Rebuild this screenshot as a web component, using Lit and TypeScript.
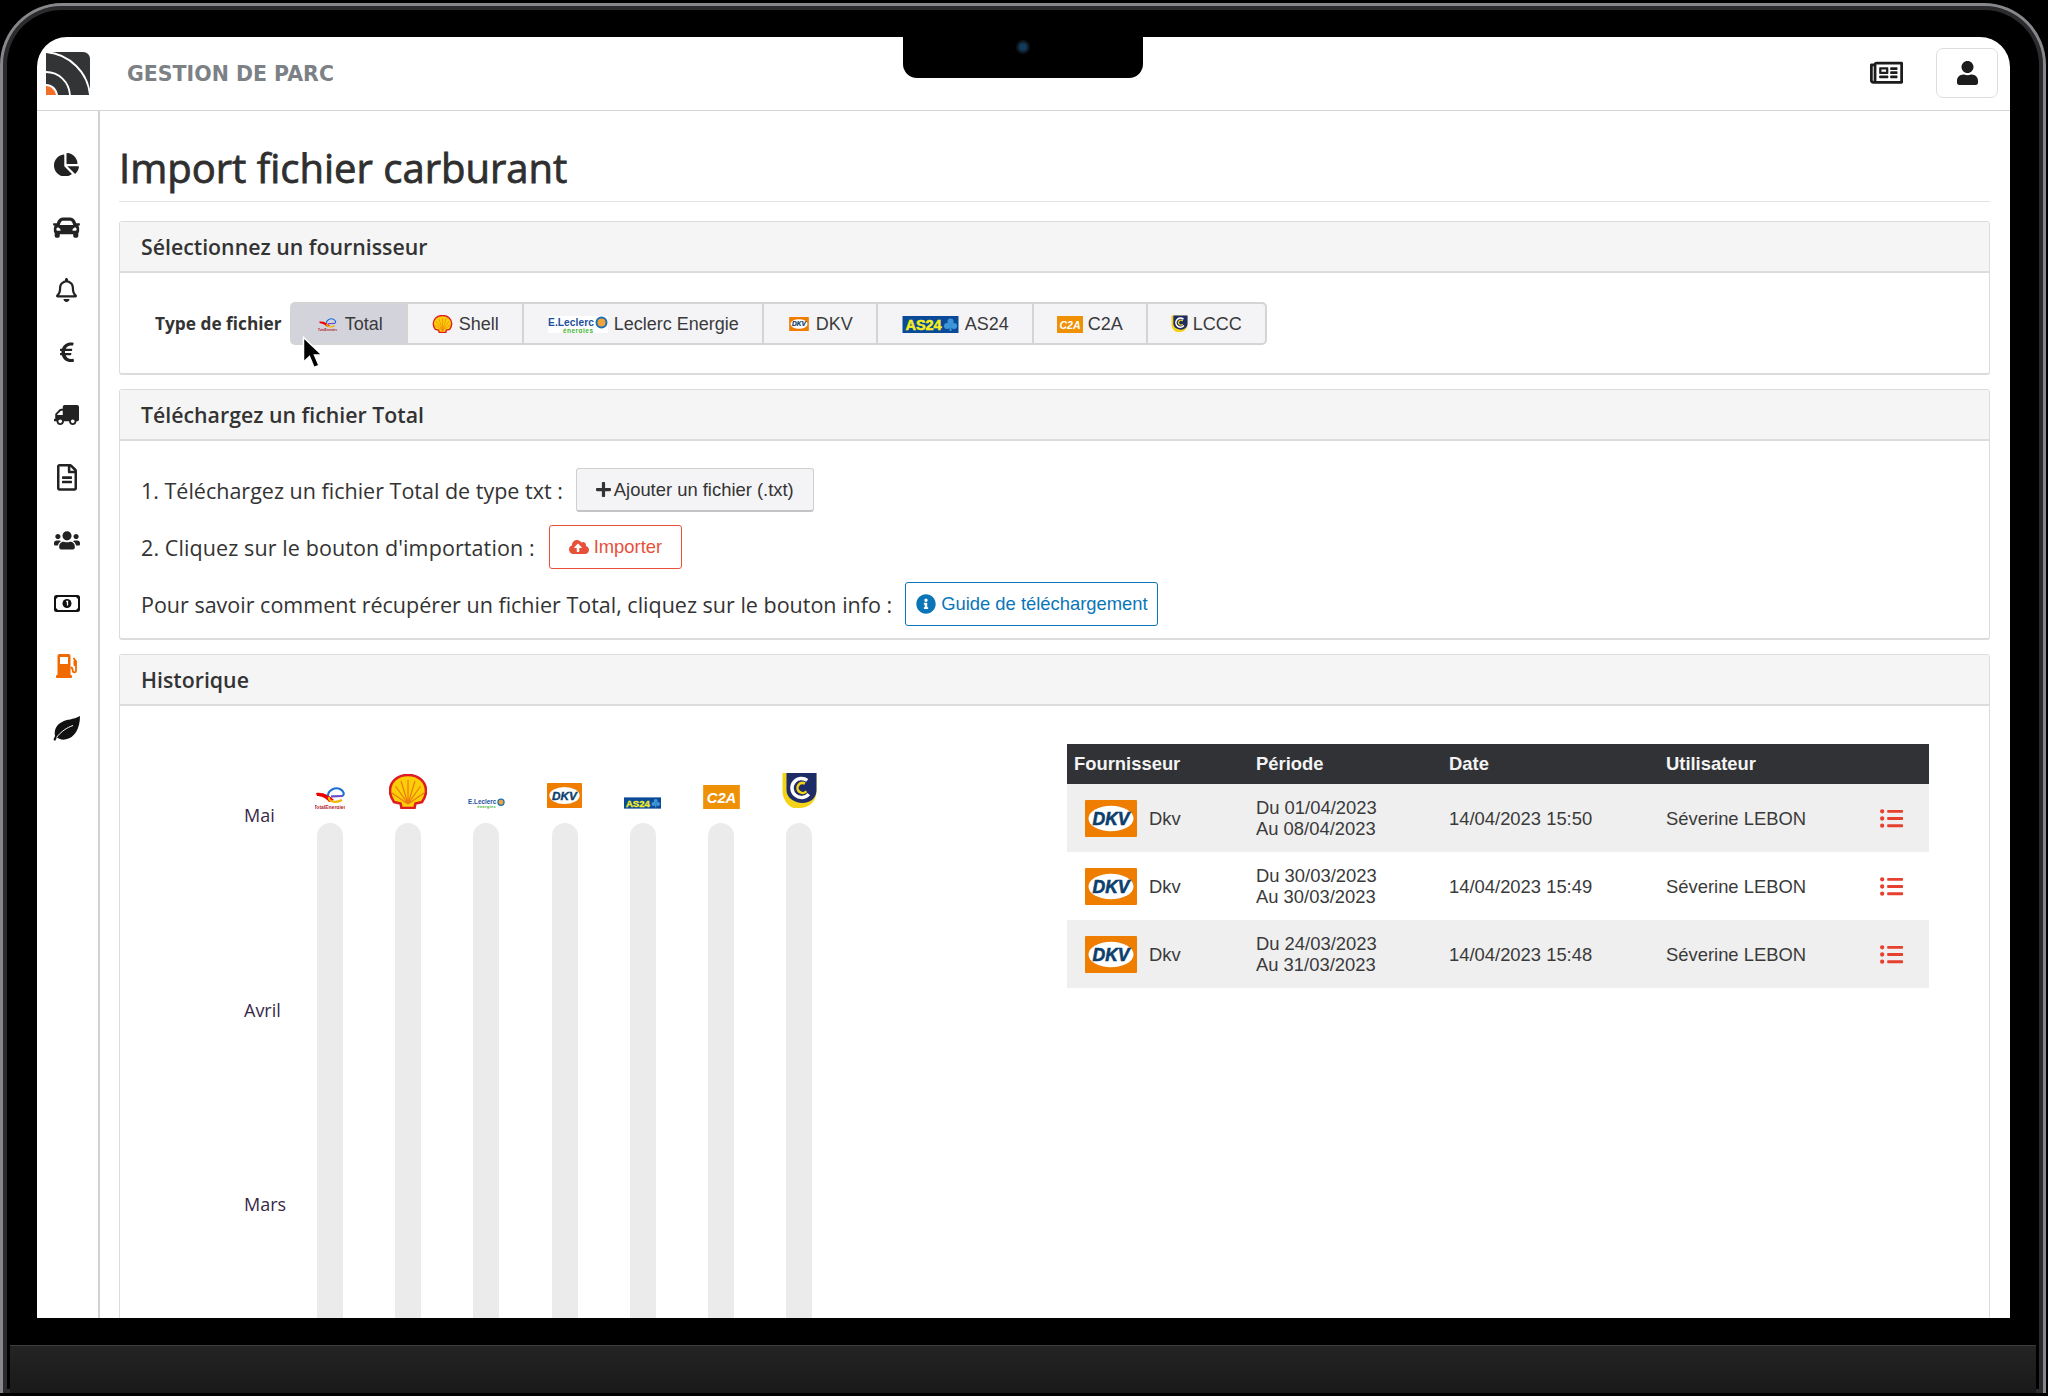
import { LitElement, html, css } from "lit";
import { customElement } from "lit/decorators.js";

const I = (w: number, vb: string, d: string, cls = "") =>
  html`<svg class=${cls} width=${w} viewBox=${vb} fill="currentColor"><path d=${d}></path></svg>`;

const P = {
  pie: "M527.79 288H290.5l158.03 158.03c6.04 6.04 15.98 6.53 22.19.68 38.7-36.46 65.32-85.61 73.13-140.86 1.34-9.46-6.51-17.85-16.06-17.85zm-15.83-64.8C503.72 103.74 408.26 8.28 288.8.04 279.68-.59 272 7.1 272 16.24V240h223.77c9.14 0 16.82-7.68 16.19-16.8zM224 288V50.71c0-9.55-8.39-17.4-17.84-16.06C86.99 51.49-4.1 155.6.14 280.37 4.5 408.51 114.83 513.59 243.03 511.98c50.4-.63 96.97-16.87 135.26-44.03 7.9-5.6 8.42-17.23 1.57-24.08L224 288z",
  car: "M499.99 176h-59.87l-16.64-41.6C406.38 91.63 365.57 64 319.5 64h-127c-46.06 0-86.88 27.63-103.99 70.4L71.87 176H12.01C4.2 176-1.53 183.34.37 190.91l6 24C7.7 220.25 12.5 224 18.01 224h20.07C24.65 235.73 16 252.78 16 272v48c0 16.12 6.16 30.67 16 41.93V416c0 17.67 14.33 32 32 32h32c17.67 0 32-14.33 32-32v-32h256v32c0 17.67 14.33 32 32 32h32c17.67 0 32-14.33 32-32v-54.07c9.84-11.25 16-25.8 16-41.93v-48c0-19.22-8.65-36.27-22.07-48H494c5.51 0 10.31-3.75 11.64-9.09l6-24c1.89-7.57-3.84-14.91-11.65-14.91zm-352.06-17.83c7.29-18.22 24.94-30.17 44.57-30.17h127c19.63 0 37.28 11.95 44.57 30.17L384 208H128l19.93-49.83zM96 319.8c-19.2 0-32-12.76-32-31.9S76.8 256 96 256s48 28.71 48 47.85-28.8 15.95-48 15.95zm320 0c-19.2 0-48 3.19-48-15.95S396.8 256 416 256s32 12.76 32 31.9-12.8 31.9-32 31.9z",
  bell: "M439.39 362.29c-19.32-20.76-55.47-51.99-55.47-154.29 0-77.7-54.48-139.9-127.94-155.16V32c0-17.67-14.32-32-31.98-32s-31.98 14.33-31.98 32v20.84C118.56 68.1 64.08 130.3 64.08 208c0 102.3-36.15 133.53-55.47 154.29-6 6.45-8.66 14.16-8.61 21.71.11 16.4 12.98 32 32.1 32h383.8c19.12 0 32-15.6 32.1-32 .05-7.55-2.61-15.27-8.61-21.71zM67.53 368c21.22-27.97 44.42-74.33 44.53-159.42 0-.2-.06-.38-.06-.58 0-61.86 50.14-112 112-112s112 50.14 112 112c0 .2-.06.38-.06.58.11 85.1 23.31 131.46 44.53 159.42H67.53zM224 512c35.32 0 63.97-28.65 63.97-64H160.03c0 35.35 28.65 64 63.97 64z",
  euro: "M310.706 413.765c-1.314-6.63-7.835-10.872-14.424-9.369-10.692 2.439-27.422 5.413-45.426 5.413-56.763 0-101.929-34.79-121.461-85.449h113.689a12 12 0 0 0 11.708-9.369l6.373-28.36c1.686-7.502-4.019-14.631-11.708-14.631H115.22c-1.21-14.328-1.414-28.287.137-42.245H261.95a12 12 0 0 0 11.723-9.434l6.512-29.755c1.638-7.484-4.061-14.566-11.723-14.566H130.184c20.633-44.991 62.69-75.03 117.619-75.03 14.486 0 28.564 2.25 37.851 4.145 6.216 1.268 12.347-2.498 14.002-8.623l11.991-44.368c1.822-6.741-2.465-13.616-9.326-14.917C290.217 34.912 270.71 32 249.635 32 152.451 32 74.03 92.252 45.075 176H12c-6.627 0-12 5.373-12 12v29.755c0 6.627 5.373 12 12 12h21.569c-1.009 13.607-1.181 29.287-.181 42.245H12c-6.627 0-12 5.373-12 12v28.36c0 6.627 5.373 12 12 12h30.114C67.139 414.692 145.264 480 249.635 480c26.301 0 48.562-4.544 61.101-7.788 6.167-1.595 10.027-7.708 8.788-13.957l-8.818-44.49z",
  truck: "M624 352h-16V243.9c0-12.7-5.1-24.9-14.1-33.9L494 110.1c-9-9-21.2-14.1-33.9-14.1H416V48c0-26.5-21.5-48-48-48H48C21.5 0 0 21.5 0 48v320c0 26.5 21.5 48 48 48h16c0 53 43 96 96 96s96-43 96-96h128c0 53 43 96 96 96s96-43 96-96h48c8.8 0 16-7.2 16-16v-32c0-8.8-7.2-16-16-16zM160 464c-26.5 0-48-21.5-48-48s21.5-48 48-48 48 21.5 48 48-21.5 48-48 48zm320 0c-26.5 0-48-21.5-48-48s21.5-48 48-48 48 21.5 48 48-21.5 48-48 48zm80-208H416V144h44.1l99.9 99.9V256z",
  file: "M288 248v28c0 6.6-5.4 12-12 12H108c-6.6 0-12-5.4-12-12v-28c0-6.6 5.4-12 12-12h168c6.6 0 12 5.4 12 12zm-12 72H108c-6.6 0-12 5.4-12 12v28c0 6.6 5.4 12 12 12h168c6.6 0 12-5.4 12-12v-28c0-6.6-5.4-12-12-12zm108-188.1V464c0 26.5-21.5 48-48 48H48c-26.5 0-48-21.5-48-48V48C0 21.5 21.5 0 48 0h204.1C264.8 0 277 5.1 286 14.1L369.9 98c9 8.9 14.1 21.2 14.1 33.9zm-128-80V128h76.1L256 51.9zM336 464V176H232c-13.3 0-24-10.7-24-24V48H48v416h288z",
  users: "M96 224c35.3 0 64-28.7 64-64s-28.7-64-64-64-64 28.7-64 64 28.7 64 64 64zm448 0c35.3 0 64-28.7 64-64s-28.7-64-64-64-64 28.7-64 64 28.7 64 64 64zm32 32h-64c-17.6 0-33.5 7.1-45.1 18.6 40.3 22.1 68.9 62 75.1 109.4h66c17.7 0 32-14.3 32-32v-32c0-35.3-28.7-64-64-64zm-256 0c61.9 0 112-50.1 112-112S381.9 32 320 32 208 82.1 208 144s50.1 112 112 112zm76.8 32h-8.3c-20.8 10-43.9 16-68.5 16s-47.6-6-68.5-16h-8.3C179.6 288 128 339.6 128 403.2V432c0 26.5 21.5 48 48 48h288c26.5 0 48-21.5 48-48v-28.8c0-63.6-51.6-115.2-115.2-115.2zm-223.7-13.4C161.5 263.1 145.6 256 128 256H64c-35.3 0-64 28.7-64 64v32c0 17.7 14.3 32 32 32h65.9c6.3-47.4 34.9-87.3 75.2-109.4z",
  news: "M552 64H112c-20.858 0-38.643 13.377-45.248 32H24c-13.255 0-24 10.745-24 24v272c0 30.928 25.072 56 56 56h496c13.255 0 24-10.745 24-24V88c0-13.255-10.745-24-24-24zM48 392V144h16v248c0 4.411-3.589 8-8 8s-8-3.589-8-8zm480 8H111.422c.374-2.614.578-5.283.578-8V112h416v288zM172 280h136c6.627 0 12-5.373 12-12v-96c0-6.627-5.373-12-12-12H172c-6.627 0-12 5.373-12 12v96c0 6.627 5.373 12 12 12zm28-80h80v40h-80v-40zm-40 140v-24c0-6.627 5.373-12 12-12h136c6.627 0 12 5.373 12 12v24c0 6.627-5.373 12-12 12H172c-6.627 0-12-5.373-12-12zm192 0v-24c0-6.627 5.373-12 12-12h104c6.627 0 12 5.373 12 12v24c0 6.627-5.373 12-12 12H364c-6.627 0-12-5.373-12-12zm0-144v-24c0-6.627 5.373-12 12-12h104c6.627 0 12 5.373 12 12v24c0 6.627-5.373 12-12 12H364c-6.627 0-12-5.373-12-12zm0 72v-24c0-6.627 5.373-12 12-12h104c6.627 0 12 5.373 12 12v24c0 6.627-5.373 12-12 12H364c-6.627 0-12-5.373-12-12z",
  user: "M224 256c70.7 0 128-57.3 128-128S294.7 0 224 0 96 57.3 96 128s57.3 128 128 128zm89.6 32h-16.7c-22.2 10.2-46.9 16-72.9 16s-50.6-5.8-72.9-16h-16.7C60.2 288 0 348.2 0 422.4V464c0 26.5 21.5 48 48 48h352c26.5 0 48-21.5 48-48v-41.6c0-74.2-60.2-134.4-134.4-134.4z",
  plus: "M416 208H272V64c0-17.67-14.33-32-32-32h-32c-17.67 0-32 14.33-32 32v144H32c-17.67 0-32 14.33-32 32v32c0 17.67 14.33 32 32 32h144v144c0 17.67 14.33 32 32 32h32c17.67 0 32-14.33 32-32V304h144c17.67 0 32-14.33 32-32v-32c0-17.67-14.33-32-32-32z",
  cloud: "M537.6 226.6c4.1-10.7 6.4-22.4 6.4-34.6 0-53-43-96-96-96-19.7 0-38.1 6-53.3 16.2C367 64.2 315.3 32 256 32c-88.4 0-160 71.6-160 160 0 2.7.1 5.4.2 8.1C40.2 219.8 0 273.2 0 336c0 79.5 64.5 144 144 144h368c70.7 0 128-57.3 128-128 0-61.9-44-113.6-102.4-125.4zM393.4 288H328v112c0 8.8-7.2 16-16 16h-48c-8.8 0-16-7.2-16-16V288h-65.4c-14.3 0-21.4-17.2-11.3-27.3l105.4-105.4c6.2-6.2 16.4-6.2 22.6 0l105.4 105.4c10.1 10.1 2.9 27.3-11.3 27.3z",
  info: "M256 8C119.043 8 8 119.083 8 256c0 136.997 111.043 248 248 248s248-111.003 248-248C504 119.083 392.957 8 256 8zm0 110c23.196 0 42 18.804 42 42s-18.804 42-42 42-42-18.804-42-42 18.804-42 42-42zm56 254c0 6.627-5.373 12-12 12h-88c-6.627 0-12-5.373-12-12v-24c0-6.627 5.373-12 12-12h12v-64h-12c-6.627 0-12-5.373-12-12v-24c0-6.627 5.373-12 12-12h64c6.627 0 12 5.373 12 12v100h12c6.627 0 12 5.373 12 12v24z",
  list: "M48 48a48 48 0 1 0 48 48 48 48 0 0 0-48-48zm0 160a48 48 0 1 0 48 48 48 48 0 0 0-48-48zm0 160a48 48 0 1 0 48 48 48 48 0 0 0-48-48zm448 16H176a16 16 0 0 0-16 16v32a16 16 0 0 0 16 16h320a16 16 0 0 0 16-16v-32a16 16 0 0 0-16-16zm0-320H176a16 16 0 0 0-16 16v32a16 16 0 0 0 16 16h320a16 16 0 0 0 16-16V80a16 16 0 0 0-16-16zm0 160H176a16 16 0 0 0-16 16v32a16 16 0 0 0 16 16h320a16 16 0 0 0 16-16v-32a16 16 0 0 0-16-16z",
};

const F = "Liberation Sans, Arial, sans-serif";

const logos: Record<string, (w: number, h: number) => unknown> = {
  total: (w, h) => html`<svg width=${w} height=${h} viewBox="0 0 30 22">
    <path d="M1 6 C8 5 14 8 19 13 L14 15 C11 11 6 9 2 9Z" fill="#ee0000"></path>
    <path d="M13 9 C13 3 20 0 25 2 C29 4 30 8 27 9 L16 9.500" fill="none" stroke="#1d6fd6" stroke-width="2"></path>
    <path d="M14 10 C13 14 20 17 27 13" fill="none" stroke="#f7b500" stroke-width="2.200"></path>
    <path d="M16 9.500 L27 9" stroke="#8a3fc7" stroke-width="1.600"></path>
    <text x="15" y="21.500" text-anchor="middle" font-size="5" font-weight="700" font-family=${F} fill="#b3202a">TotalEnergies</text>
  </svg>`,
  shell: (w, h) => html`<svg width=${w} height=${h} viewBox="0 0 38 35">
    <path d="M19 1C8 1 1 8 1 17c0 4 2 8 4 11l6.500 1.500L12.500 34h13l1-4.500L33 28c2-3 4-7 4-11 0-9-7-16-18-16z" fill="#fbce07" stroke="#dd1d21" stroke-width="2.600"></path>
    <path d="M19 30V6M19 30L12 7M19 30L26 7M19 30L6.500 12M19 30L31.500 12M19 30L3 19M19 30L35 19" stroke="#ee7a10" stroke-width="1.200"></path>
  </svg>`,
  leclerc: (w, h) => html`<svg width=${w} height=${h} viewBox="0 0 60 17">
    <rect width="60" height="17" fill="#fff"></rect>
    <text x="0" y="9.500" font-size="10.200" font-weight="700" font-family=${F} fill="#1b4f9c" textLength="46">E.Leclerc</text>
    <circle cx="53.500" cy="6.500" r="5" fill="#f2a33a" stroke="#1b6fb5" stroke-width="2"></circle>
    <text x="15" y="16.500" font-size="6.500" font-weight="700" font-family=${F} fill="#45b52f" textLength="30">énergies</text>
  </svg>`,
  dkv: (w, h) => html`<svg width=${w} height=${h} viewBox="0 0 52 37">
    <rect width="52" height="37" rx="1" fill="#ee7d00"></rect>
    <ellipse cx="26" cy="18.500" rx="22.500" ry="12.800" fill="#fff"></ellipse>
    <text x="26" y="24.500" text-anchor="middle" font-size="17.500" font-weight="700" font-style="italic" font-family=${F} fill="#0d3f6e" stroke="#0d3f6e" stroke-width="0.600">DKV</text>
  </svg>`,
  as24: (w, h) => html`<svg width=${w} height=${h} viewBox="0 0 56 17">
    <rect width="56" height="17" fill="#0b4a97"></rect>
    <text x="3" y="14" font-size="14.500" font-weight="700" font-family=${F} fill="#f5ee1f" stroke="#f5ee1f" stroke-width="0.500" textLength="36">AS24</text>
    <circle cx="48" cy="5.500" r="3" fill="#3d97d9"></circle><circle cx="44.500" cy="10" r="3" fill="#3d97d9"></circle><circle cx="51.500" cy="10" r="3" fill="#3d97d9"></circle><rect x="47" y="8" width="2" height="7" fill="#3d97d9"></rect>
  </svg>`,
  c2a: (w, h) => html`<svg width=${w} height=${h} viewBox="0 0 26 17">
    <rect width="26" height="17" fill="#ee9107"></rect>
    <text x="13" y="12.500" text-anchor="middle" font-size="10.500" font-weight="700" font-style="italic" font-family=${F} fill="#fff">C2A</text>
  </svg>`,
  lccc: (w, h) => html`<svg width=${w} height=${h} viewBox="0 0 36 36">
    <path d="M1 0H35V18C35 28 28 35 18 35 H12 C6 33 1 26 1 18Z" fill="#f3d218"></path>
    <path d="M5 0H35V17C35 24 30 30 20 30 C11 29 5 24 5 17Z" fill="#1d2c66"></path>
    <circle cx="20" cy="15" r="9.500" fill="none" stroke="#fff" stroke-width="3.500" stroke-dasharray="44 16" transform="rotate(40 20 15)"></circle>
    <circle cx="21" cy="15" r="5" fill="none" stroke="#f3d218" stroke-width="2.600" stroke-dasharray="22 10" transform="rotate(40 21 15)"></circle>
  </svg>`,
};

const tabs: [string, string, number, number][] = [
  ["Total", "total", 25, 13],
  ["Shell", "shell", 23, 18],
  ["Leclerc Energie", "leclerc", 62, 17],
  ["DKV", "dkv", 24, 14],
  ["AS24", "as24", 59, 17],
  ["C2A", "c2a", 26, 17],
  ["LCCC", "lccc", 17, 18],
];
const chartLogos: [string, number, number][] = [
  ["total", 30, 22], ["shell", 38, 35], ["leclerc", 37, 11], ["dkv", 35, 27],
  ["as24", 37, 12], ["c2a", 37, 24], ["lccc", 37, 36],
];
const rows = [
  ["Du 01/04/2023", "Au 08/04/2023", "14/04/2023 15:50"],
  ["Du 30/03/2023", "Au 30/03/2023", "14/04/2023 15:49"],
  ["Du 24/03/2023", "Au 31/03/2023", "14/04/2023 15:48"],
];

@customElement("app-root")
export class AppRoot extends LitElement {
  static styles = css`
    :host { display: block; width: 2048px; height: 1396px; background: #000; overflow: hidden; }
    * { box-sizing: border-box; }
    svg { display: block; }
    .device { width: 2046px; height: 1390px; margin-top: 3px; padding: 31px 7px 0; background: #000;
      border: 3px solid #85878b; border-bottom: 0; border-radius: 62px 62px 0 0; box-shadow: inset 0 0 0 4px #2b2b2d; }
    .screen { position: relative; height: 1281px; margin: 0 26px 0 27px; background: #fff; border-radius: 30px 30px 0 0;
      overflow: hidden; display: flex; flex-direction: column; font-family: "Open Sans", sans-serif; color: #333; }
    .base { height: 48px; background: linear-gradient(#242424, #191919); border-top: 1px solid #3d3d3d; margin-top: 27px; }
    .notch { position: absolute; left: 866px; top: 0; width: 240px; height: 41px; background: #000; border-radius: 0 0 14px 14px; display: flex; justify-content: center; padding-top: 3px; }
    .cam { width: 14px; height: 14px; border-radius: 50%; background: radial-gradient(circle, #123a5c 0 30%, #0d1116 60%); }
    .cursor { position: absolute; left: 265px; top: 299px; }
    header { height: 74px; flex: none; border-bottom: 1px solid #d6d6d6; display: flex; align-items: center; padding: 0 12px 1px 9px; }
    .brand { margin-left: 37px; padding-top: 2px; font: 700 20.500px "DejaVu Sans", sans-serif; color: #7c8186; }
    .hr-icons { margin-left: auto; display: flex; align-items: center; gap: 33px; color: #1c1c1c; }
    .userbtn { width: 62px; height: 50px; border: 1px solid #ddd; border-radius: 7px; display: flex; align-items: center; justify-content: center; }
    .content { flex: 1; display: flex; min-height: 0; }
    nav { width: 63px; flex: none; border-right: 2px solid #d2d2d2; padding-top: 22px; display: flex; flex-direction: column; align-items: center; color: #222; padding-right: 2px; }
    .slot { height: 62.700px; display: flex; align-items: center; justify-content: center; flex: none; }
    .fuel { color: #f06a00; }
    .flip { transform: scaleX(-1); }
    .bill { color: #111; }
    main { flex: 1; min-width: 0; padding: 0 20px 0 19px; overflow: hidden; }
    h1 { margin: 0; height: 91px; padding-top: 30px; font-size: 40px; line-height: 54px; font-weight: 400; color: #2f2f2f; border-bottom: 1px solid #e4e4e4; -webkit-text-stroke: 0.8px #2f2f2f; }
    .panel { border: 1px solid #dcdcdc; border-bottom-width: 2px; border-radius: 3px; margin-bottom: 14px; }
    .panel:first-of-type { margin-top: 19px; }
    .ph { height: 51px; background: #f5f5f5; border-bottom: 2px solid #dcdcdc; padding-left: 21px; font-size: 21.300px; font-weight: 600; line-height: 50px; color: #333; }
    .p1 { display: flex; align-items: center; padding: 29px 0 28px 35px; }
    .lab { font-size: 17.300px; font-weight: 700; color: #333; margin-right: 8px; }
    .group { display: flex; height: 43px; border: 2px solid #d4d4d4; border-radius: 5px; background: #f4f4f7; }
    .tab { display: flex; align-items: center; gap: 5px; padding: 1px 23px 0; font: 18px "Liberation Sans", Arial, sans-serif; color: #3a3a3a; border-right: 2px solid #d4d4d4; }
    .tab:last-child { border-right: 0; }
    .tab.on { background: #d3d3dc; }
    .p2 { padding: 27px 0 12px 21px; display: flex; flex-direction: column; gap: 13px; font-size: 21.500px; color: #333; }
    .row { display: flex; align-items: center; gap: 13px; height: 44px; }
    .r2 { letter-spacing: 0.1px; gap: 14px; }
    .btn { height: 44px; display: flex; align-items: center; padding: 0 19px; border-radius: 3px; font: 18.400px "Liberation Sans", Arial, sans-serif; gap: 5px; letter-spacing: 0; }
    .add { background: #f4f4f7; border: 1px solid #d0d0d0; border-bottom: 2px solid #c4c4c4; color: #333; gap: 3px; }
    .imp { background: #fff; border: 1px solid #e8503a; color: #e8503a; }
    .inf { background: #fff; border: 1px solid #0a76b8; color: #0a76b8; padding: 0 9px 0 10px; }
    .p3 { display: flex; height: 900px; }
    .chart { width: 947px; flex: none; display: flex; }
    .labels { width: 171px; padding: 12px 0 0 124px; font-size: 18px; color: #38284a; }
    .labels div { height: 194.500px; display: flex; align-items: center; }
    .col { width: 78.200px; display: flex; flex-direction: column; align-items: center; }
    .lg { height: 105px; display: flex; align-items: flex-end; }
    .bar { margin-top: 14px; width: 26px; height: 800px; background: #ebebeb; border-radius: 13px 13px 0 0; }
    table { width: 862px; height: 244px; margin-top: 38px; border-collapse: collapse; table-layout: fixed; font: 18.400px "Liberation Sans", Arial, sans-serif; color: #3a3a3a; }
    th { height: 40px; background: #313235; color: #f4f4f4; font-weight: 700; text-align: left; padding: 0 0 0 7px; }
    td { height: 68px; padding: 0 0 0 7px; line-height: 21px; }
    tbody tr:nth-child(odd) td { background: #efefef; }
    .cell { display: flex; align-items: center; gap: 12px; padding-left: 11px; }
    .act { color: #e8402f; }
  `;

  render() {
    return html`
      <div class="device">
        <div class="screen">
          <header>
            <svg width="44" height="44" viewBox="0 0 44 44">
              <path d="M0 2 C4 1 8 1 8 1 H37 C41 1 44 4 44 8 V44 H0Z" fill="#333435"></path>
              <path d="M0 1 C24 3 42 22 44 44" fill="none" stroke="#fff" stroke-width="1.800"></path>
              <path d="M0 21 C13 21 23 31 24 44" fill="none" stroke="#fff" stroke-width="1.800"></path>
              <path d="M0 33 C7 33 11 38 12 44 H0Z" fill="#fff"></path>
              <path d="M0 35 C5 35 9 39 10 44 H0Z" fill="#f0702a"></path>
            </svg>
            <div class="brand">GESTION DE PARC</div>
            <div class="hr-icons">
              ${I(33, "0 0 576 512", P.news)}
              <div class="userbtn">${I(21, "0 0 448 512", P.user)}</div>
            </div>
          </header>
          <div class="content">
            <nav>
              <div class="slot">${I(25, "0 0 544 512", P.pie)}</div>
              <div class="slot">${I(27, "0 0 512 512", P.car)}</div>
              <div class="slot">${I(21, "0 0 448 512", P.bell)}</div>
              <div class="slot">${I(14, "0 0 320 512", P.euro)}</div>
              <div class="slot">${I(25, "0 0 640 512", P.truck, "flip")}</div>
              <div class="slot">${I(20, "0 0 384 512", P.file)}</div>
              <div class="slot">${I(26, "0 0 640 512", P.users)}</div>
              <div class="slot">
                <svg class="bill" width="26" height="17" viewBox="0 0 26 17">
                  <rect x="1" y="1" width="24" height="15" rx="1.500" fill="#fff" stroke="currentColor" stroke-width="2"></rect>
                  <path d="M1 1h4L1 5zM25 1h-4l4 4zM1 16h4l-4-4zM25 16h-4l4-4z" fill="currentColor"></path>
                  <circle cx="13" cy="8.500" r="4.500" fill="currentColor"></circle>
                  <path d="M12.200 6.500h1.300v4" stroke="#fff" stroke-width="1.300" fill="none"></path>
                </svg>
              </div>
              <div class="slot fuel">
                <svg width="21" height="24" viewBox="0 0 21 24" fill="currentColor">
                  <path fill-rule="evenodd" d="M3 0H12.500A2 2 0 0 1 14.500 2V21H1.500V2A2 2 0 0 1 3 0ZM4 3V10H12V3Z"></path>
                  <rect x="0" y="21" width="16" height="3" rx="0.800"></rect>
                  <path d="M14.500 13.500C16.500 13.500 16.700 15 16.700 16.500C16.700 19 20 19 20 16.500V7.500L17.500 4" fill="none" stroke="currentColor" stroke-width="1.800"></path>
                  <rect x="17.500" y="6" width="3" height="6" rx="1"></rect>
                </svg>
              </div>
              <div class="slot">
                <svg width="27" height="25" viewBox="0 0 27 25">
                  <path d="M27 0C20 4 14 3 9 6C3 9 1 14 2 20L0.500 23.500L2 25L4 21.500C6 23 9 24 12 23.500C22 22 27 12 27 0Z" fill="#111"></path>
                  <path d="M3.500 21.500C8 15.500 14 11.500 20 9.500" fill="none" stroke="#fff" stroke-width="1"></path>
                </svg>
              </div>
            </nav>
            <main>
              <h1>Import fichier carburant</h1>
              <section class="panel">
                <div class="ph">Sélectionnez un fournisseur</div>
                <div class="p1">
                  <span class="lab">Type de fichier</span>
                  <div class="group">
                    ${tabs.map(([t, k, w, h], i) => html`<div class="tab ${i === 0 ? "on" : ""}">${logos[k](w, h)}<span>${t}</span></div>`)}
                  </div>
                </div>
              </section>
              <section class="panel">
                <div class="ph">Téléchargez un fichier Total</div>
                <div class="p2">
                  <div class="row"><span>1. Téléchargez un fichier Total de type txt :</span>
                    <div class="btn add">${I(15, "0 0 448 512", P.plus)}Ajouter un fichier (.txt)</div></div>
                  <div class="row r2"><span>2. Cliquez sur le bouton d'importation :</span>
                    <div class="btn imp">${I(20, "0 0 640 512", P.cloud)}Importer</div></div>
                  <div class="row"><span>Pour savoir comment récupérer un fichier Total, cliquez sur le bouton info :</span>
                    <div class="btn inf">${I(20, "0 0 512 512", P.info)}Guide de téléchargement</div></div>
                </div>
              </section>
              <section class="panel">
                <div class="ph">Historique</div>
                <div class="p3">
                  <div class="chart">
                    <div class="labels"><div>Mai</div><div>Avril</div><div>Mars</div></div>
                    ${chartLogos.map(([k, w, h]) => html`<div class="col"><div class="lg">${logos[k](w, h)}</div><div class="bar"></div></div>`)}
                  </div>
                  <table>
                    <colgroup><col width="182" /><col width="193" /><col width="217" /><col width="214" /><col width="56" /></colgroup>
                    <thead><tr><th>Fournisseur</th><th>Période</th><th>Date</th><th>Utilisateur</th><th></th></tr></thead>
                    <tbody>
                      ${rows.map((r) => html`<tr>
                        <td><div class="cell">${logos.dkv(52, 37)}<span>Dkv</span></div></td>
                        <td>${r[0]}<br />${r[1]}</td>
                        <td>${r[2]}</td>
                        <td>Séverine LEBON</td>
                        <td class="act">${I(23, "0 0 512 512", P.list)}</td>
                      </tr>`)}
                    </tbody>
                  </table>
                </div>
              </section>
            </main>
          </div>
          <div class="notch"><div class="cam"></div></div>
          <svg class="cursor" width="22" height="34" viewBox="0 0 22 34">
            <path d="M1.500 1.500V26L7.500 20.500L12 31.500L17 29.500L12.500 19H20Z" fill="#000" stroke="#fff" stroke-width="1.500"></path>
          </svg>
        </div>
        <div class="base"></div>
      </div>
    `;
  }
}
